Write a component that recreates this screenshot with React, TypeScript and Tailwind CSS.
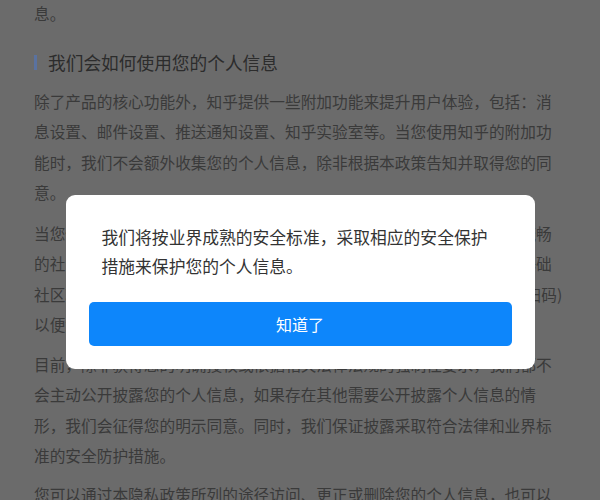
import React from "react";

const font = { fontFamily: '"Noto Sans CJK SC", "Noto Sans", sans-serif' };

export default function App() {
  return (
    <div
      className="relative w-[600px] h-[500px] overflow-hidden bg-[#6b6b6b] text-[#3a3a3a]"
      style={font}
    >
      <div className="pl-[34px] w-[564px] text-[15.7px] leading-[30.5px]">
        <p className="-mt-px">息。</p>
        <h2 className="mt-[18px] mb-[9px] h-[30px] flex items-center text-[17.7px] text-[#2c2c2c] font-normal">
          <span className="w-[3px] h-[15px] bg-[#5a72a0] mr-[11px] shrink-0" />
          我们会如何使用您的个人信息
        </h2>
        <p>
          除了产品的核心功能外，知乎提供一些附加功能来提升用户体验，包括：消息设置、邮件设置、推送通知设置、知乎实验室等。当您使用知乎的附加功能时，我们不会额外收集您的个人信息，除非根据本政策告知并取得您的同意。
        </p>
        <p className="mt-[10px]">
          当您使用知乎提供的问答、文章、想法等社区功能时，为了让您享受更流畅的社区氛围，我们会收集您的设备信息、日志信息等必要数据，以保障基础社区功能的正常运行，您可以选择第三方账号登录(包括微信扫码、微博扫码)以便您快速登录并使用知乎。
        </p>
        <p className="mt-[9px]">
          目前，除非获得您的明确授权或依据相关法律法规的强制性要求，我们都不会主动公开披露您的个人信息，如果存在其他需要公开披露个人信息的情形，我们会征得您的明示同意。同时，我们保证披露采取符合法律和业界标准的安全防护措施。
        </p>
        <p className="mt-[8px]">
          您可以通过本隐私政策所列的途径访问、更正或删除您的个人信息，也可以撤回您的同意。
        </p>
      </div>

      <div className="absolute inset-0 flex justify-center pt-[195px]">
        <div className="w-[469px] h-[174px] rounded-[9px] bg-white pt-[28px] px-[23px] pb-[23px] flex flex-col">
          <p className="px-[13px] text-[16.8px] leading-[29px] text-[#333333]">
            我们将按业界成熟的安全标准，采取相应的安全保护措施来保护您的个人信息。
          </p>
          <button className="mt-[21px] h-[44px] w-full rounded-[5px] bg-[#0d86fb] text-white text-[16px] flex items-center justify-center">
            知道了
          </button>
        </div>
      </div>
    </div>
  );
}
